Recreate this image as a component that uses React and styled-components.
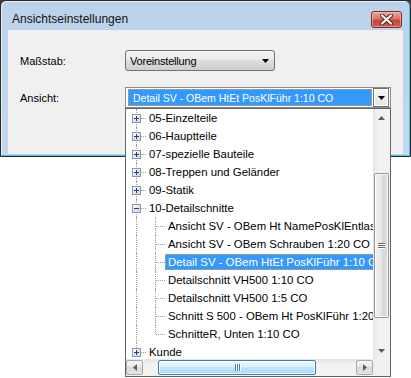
import React from 'react'
import styled, { createGlobalStyle } from 'styled-components'

const GlobalStyle = createGlobalStyle`
  html, body {
    margin: 0;
    padding: 0;
    background: #fff;
  }
  body {
    font-family: "Liberation Sans", Arial, sans-serif;
    font-size: 11px;
    color: #000;
  }
`

const rows = [
  { level: 0, label: '05-Einzelteile', expander: 'plus' },
  { level: 0, label: '06-Hauptteile', expander: 'plus' },
  { level: 0, label: '07-spezielle Bauteile', expander: 'plus' },
  { level: 0, label: '08-Treppen und Geländer', expander: 'plus' },
  { level: 0, label: '09-Statik', expander: 'plus' },
  { level: 0, label: '10-Detailschnitte', expander: 'minus' },
  { level: 1, label: 'Ansicht SV - OBem Ht NamePosKlEntlastung 1:10 CO' },
  { level: 1, label: 'Ansicht SV - OBem Schrauben 1:20 CO' },
  { level: 1, label: 'Detail SV - OBem HtEt PosKlFühr 1:10 CO', selected: true },
  { level: 1, label: 'Detailschnitt VH500 1:10 CO' },
  { level: 1, label: 'Detailschnitt VH500 1:5 CO' },
  { level: 1, label: 'Schnitt S 500 - OBem Ht PosKlFühr 1:20 CO' },
  { level: 1, label: 'SchnitteR, Unten 1:10 CO', last: true },
  { level: 0, label: 'Kunde', expander: 'plus', last: true },
]

function Expander({ open }) {
  return (
    <ExpanderBox>
      <svg width="9" height="9" viewBox="0 0 9 9">
        <defs>
          <linearGradient id="exp" x1="0" y1="0" x2="1" y2="1">
            <stop offset="0" stopColor="#ffffff" />
            <stop offset="1" stopColor="#c9d0d8" />
          </linearGradient>
        </defs>
        <rect x="0.5" y="0.5" width="8" height="8" fill="url(#exp)" stroke="#8e99a8" />
        <rect x="2" y="4" width="5" height="1" fill="#22408a" />
        {!open && <rect x="4" y="2" width="1" height="5" fill="#22408a" />}
      </svg>
    </ExpanderBox>
  )
}

function Arrow({ dir, color = '#000' }) {
  const pts = {
    down: '0,0 7,0 3.5,4',
    up: '0,4 7,4 3.5,0',
    left: '4,0 4,7 0,3.5',
    right: '0,0 0,7 4,3.5',
  }[dir]
  const vertical = dir === 'up' || dir === 'down'
  return (
    <svg width={vertical ? 7 : 4} height={vertical ? 4 : 7}>
      <polygon points={pts} fill={color} />
    </svg>
  )
}

function TreeRow({ row }) {
  return (
    <Row>
      {row.level === 0 ? (
        <Guide $v={row.last ? 'top' : 'full'} $h>
          <Expander open={row.expander === 'minus'} />
        </Guide>
      ) : (
        <>
          <Guide $v="full" />
          <Guide $v={row.last ? 'top' : 'full'} $h />
        </>
      )}
      <Label $selected={row.selected}>{row.label}</Label>
    </Row>
  )
}

export default function App() {
  return (
    <Page>
      <GlobalStyle />
      <Window>
        <TitleBar>
          <Title>Ansichtseinstellungen</Title>
          <CloseButton>
            <svg width="13" height="11" viewBox="0 0 13 11">
              <path d="M2 1.5 L11 9.5 M11 1.5 L2 9.5" stroke="#5b2018" strokeWidth="4" strokeLinecap="round" />
              <path d="M2 1.5 L11 9.5 M11 1.5 L2 9.5" stroke="#fff" strokeWidth="2.2" strokeLinecap="round" />
            </svg>
          </CloseButton>
        </TitleBar>
        <Client>
          <FieldRow>
            <FieldLabel>Maßstab:</FieldLabel>
            <RoundCombo>
              <span>Voreinstellung</span>
              <Arrow dir="down" />
            </RoundCombo>
          </FieldRow>
          <FieldRow>
            <FieldLabel>Ansicht:</FieldLabel>
            <EditCombo>
              <ComboValue>Detail SV - OBem HtEt PosKlFühr 1:10 CO</ComboValue>
              <DropButton>
                <Arrow dir="down" />
              </DropButton>
            </EditCombo>
          </FieldRow>
        </Client>
      </Window>

      <DropList>
        <TreeView>
          {rows.map((r, i) => (
            <TreeRow key={i} row={r} />
          ))}
        </TreeView>
        <VScroll>
          <ScrollButton>
            <Arrow dir="up" color="#5d5d5d" />
          </ScrollButton>
          <VTrack>
            <VThumb>
              <GripV>
                <i />
                <i />
                <i />
              </GripV>
            </VThumb>
          </VTrack>
          <ScrollButton>
            <Arrow dir="down" color="#5d5d5d" />
          </ScrollButton>
        </VScroll>
        <HScroll>
          <HButton>
            <Arrow dir="left" color="#5d5d5d" />
          </HButton>
          <HTrack>
            <HThumb>
              <GripH>
                <i />
                <i />
                <i />
              </GripH>
            </HThumb>
          </HTrack>
          <HButton>
            <Arrow dir="right" color="#5d5d5d" />
          </HButton>
        </HScroll>
        <Corner />
      </DropList>
    </Page>
  )
}

const Page = styled.div`
position: relative;
width: 411px;
height: 378px;
overflow: hidden;
background: linear-gradient(#3b3b3b 0 6px, #fff 6px);
`

const Window = styled.div`
width: 411px;
height: 157px;
box-sizing: border-box;
border: 1px solid #2a2a2a;
border-radius: 6px 6px 0 0;
padding: 0 7px 2px 7px;
background: linear-gradient(to bottom, #bcd2ea, #c3d8ee);
box-shadow: inset 0 -1px 0 #46c4e8, inset -1px 0 0 #46c4e8, inset 1px 1px 0 rgba(255, 255, 255, 0.65);
display: flex;
flex-direction: column;
`

const TitleBar = styled.div`
height: 29px;
box-sizing: border-box;
padding: 9px 1px 2px 4px;
display: flex;
align-items: center;
justify-content: space-between;
`

const Title = styled.span`
font-family: "Liberation Sans", Arial, sans-serif;
font-size: 12px;
color: #111;
`

const CloseButton = styled.div`
width: 31px;
height: 17px;
box-sizing: border-box;
border: 1px solid #7f2c22;
border-radius: 3px;
background: linear-gradient(to bottom, #e8a99c 0%, #d7766a 45%, #c34a3c 55%, #c85a45 100%);
box-shadow: inset 0 0 0 1px rgba(255, 220, 210, 0.45);
display: flex;
align-items: center;
justify-content: center;
`

const Client = styled.div`
height: 124px;
box-sizing: border-box;
background: #f0f0f0;
padding: 20px 0 0 12px;
display: flex;
flex-direction: column;
gap: 16px;
`

const FieldRow = styled.div`
display: flex;
align-items: center;
`

const FieldLabel = styled.span`
width: 105px;
`

const RoundCombo = styled.div`
width: 150px;
height: 21px;
box-sizing: border-box;
border: 1px solid #707070;
border-radius: 3px;
background: linear-gradient(to bottom, #f2f2f2 0%, #ebebeb 50%, #dddddd 50%, #cfcfcf 100%);
padding: 0 5px 0 4px;
letter-spacing: -0.2px;
display: flex;
align-items: center;
justify-content: space-between;
`

const EditCombo = styled.div`
width: 266px;
height: 21px;
box-sizing: border-box;
border: 1px solid #8c8c8c;
background: #fff;
display: flex;
align-items: stretch;
`

const ComboValue = styled.div`
flex: 1;
margin: 1px 1px 1px 2px;
background: #3399ff;
color: #fff;
font-size: 10.5px;
outline: 1px dotted #e8a040;
outline-offset: -1px;
padding-left: 5px;
display: flex;
align-items: center;
white-space: nowrap;
overflow: hidden;
`

const DropButton = styled.div`
width: 16px;
margin-right: 1px;
box-sizing: border-box;
border: 1px solid #707070;
background: linear-gradient(to bottom, #f7f7f7, #e4e4e4);
box-shadow: inset 0 0 0 1px #fff;
display: flex;
align-items: center;
justify-content: center;
`

const DropList = styled.div`
position: absolute;
left: 125px;
top: 108px;
width: 266px;
height: 269px;
box-sizing: border-box;
border: 1px solid #646464;
background: #fff;
display: grid;
grid-template-columns: 247px 17px;
grid-template-rows: 250px 17px;
`

const TreeView = styled.div`
overflow: hidden;
padding-left: 1px;
font-size: 11.4px;
`

const Row = styled.div`
height: 18px;
display: flex;
align-items: center;
white-space: nowrap;
`

const Guide = styled.span`
position: relative;
flex-shrink: 0;
width: 19px;
height: 18px;
display: flex;
align-items: center;
padding-left: 5px;
box-sizing: border-box;
&::before {
  content: '';
  display: ${(p) => (p.$v === 'none' ? 'none' : 'block')};
  position: absolute;
  left: 9px;
  top: 0;
  height: ${(p) => (p.$v === 'top' ? '9px' : '18px')};
  border-left: 1px dotted #a0a0a0;
}
&::after {
  content: '';
  display: ${(p) => (p.$h ? 'block' : 'none')};
  position: absolute;
  left: 10px;
  right: 0;
  top: 9px;
  border-top: 1px dotted #a0a0a0;
}
`

const ExpanderBox = styled.span`
position: relative;
z-index: 1;
display: flex;
width: 9px;
height: 9px;
margin-top: 1px;
`

const Label = styled.span`
height: 16px;
line-height: 16px;
padding: 0 3px;
box-sizing: border-box;
background: ${(p) => (p.$selected ? '#3399ff' : 'transparent')};
color: ${(p) => (p.$selected ? '#fff' : '#000')};
outline: ${(p) => (p.$selected ? '1px dotted #e8a040' : 'none')};
outline-offset: -1px;
`

const VScroll = styled.div`
display: flex;
flex-direction: column;
background: linear-gradient(to right, #e3e3e3, #f2f2f2 30%, #f2f2f2);
`

const ScrollButton = styled.div`
height: 17px;
flex-shrink: 0;
display: flex;
align-items: center;
justify-content: center;
`

const VTrack = styled.div`
flex: 1;
padding: 47px 1px 0 1px;
`

const VThumb = styled.div`
height: 145px;
box-sizing: border-box;
border: 1px solid #979797;
border-radius: 2px;
background: linear-gradient(to right, #f3f3f3, #e6e6e6 50%, #d6d6d6 50%, #dcdcdc);
box-shadow: inset 0 0 0 1px rgba(255, 255, 255, 0.8);
display: flex;
align-items: center;
justify-content: center;
`

const GripV = styled.div`
display: flex;
flex-direction: column;
gap: 1px;
& > i {
  display: block;
  width: 7px;
  height: 1px;
  background: #6e6e6e;
  box-shadow: 0 1px 0 #fff;
}
`

const HScroll = styled.div`
display: flex;
background: linear-gradient(to bottom, #e3e3e3, #f2f2f2 30%, #f2f2f2);
`

const HButton = styled.div`
width: 17px;
flex-shrink: 0;
box-sizing: border-box;
margin: 1px 0;
border: 1px solid #a9a9a9;
border-radius: 2px;
background: linear-gradient(to bottom, #f6f6f6, #e6e6e6 50%, #dadada 50%, #e4e4e4);
display: flex;
align-items: center;
justify-content: center;
`

const HTrack = styled.div`
flex: 1;
padding: 1px 0 1px 15px;
display: flex;
`

const HThumb = styled.div`
width: 158px;
box-sizing: border-box;
border: 1px solid #3c7fb1;
border-radius: 2px;
background: linear-gradient(to bottom, #eaf6fd, #d9f0fc 50%, #bee6fd 50%, #a7d9f5);
box-shadow: inset 0 0 0 1px rgba(255, 255, 255, 0.7);
display: flex;
align-items: center;
justify-content: center;
`

const GripH = styled.div`
display: flex;
gap: 1px;
& > i {
  display: block;
  width: 1px;
  height: 7px;
  background: #5a7c96;
  box-shadow: 1px 0 0 #fff;
}
`

const Corner = styled.div`
background: #f0f0f0;
`
